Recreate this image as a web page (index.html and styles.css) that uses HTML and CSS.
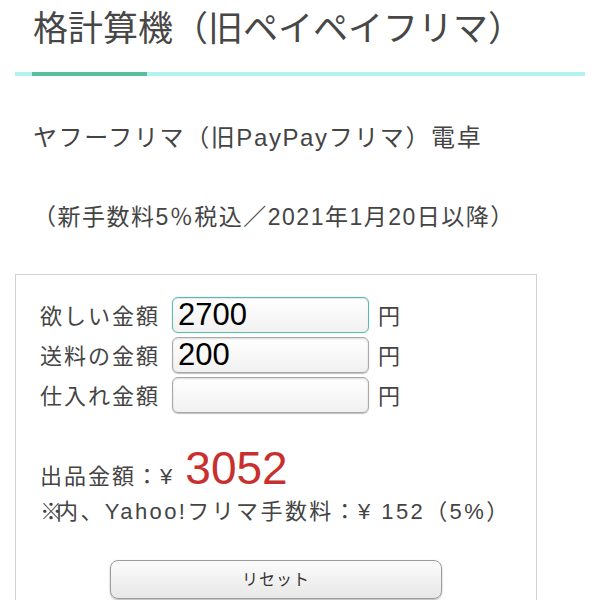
FILE: index.html
```html
<!DOCTYPE html>
<html lang="ja">
<head>
<meta charset="utf-8">
<title>格計算機（旧ペイペイフリマ）</title>
<link rel="stylesheet" href="styles.css">
</head>
<body>
<h1 class="title">格計算機（旧ペイペイフリマ）</h1>
<div class="bar"></div>
<p class="lead">ヤフーフリマ（旧PayPayフリマ）電卓</p>
<p class="note">（新手数料5％税込／2021年1月20日以降）</p>
<div class="calc">
  <div class="row">
    <label class="label">欲しい金額</label>
    <input class="field active" type="text" value="2700">
    <span class="unit">円</span>
  </div>
  <div class="row">
    <label class="label">送料の金額</label>
    <input class="field" type="text" value="200">
    <span class="unit">円</span>
  </div>
  <div class="row">
    <label class="label">仕入れ金額</label>
    <input class="field" type="text" value="">
    <span class="unit">円</span>
  </div>
  <div class="total">出品金額：¥ <span class="num">3052</span></div>
  <div class="fee"><span class="mark">※</span>内、Yahoo!フリマ手数料：¥ 152（5%）</div>
  <button class="reset" type="button">リセット</button>
</div>
</body>
</html>
```
FILE: styles.css
```css
html, body {
  background: #ffffff;
}
body {
  margin: 0;
  padding: 0 15px;
  font-family: "Liberation Sans", "Noto Sans CJK JP", sans-serif;
  color: #444444;
}
.title {
  margin: 0;
  padding: 11px 18px 0;
  font-size: 35px;
  line-height: 35px;
  font-weight: normal;
  color: #474747;
}
.bar {
  margin-top: 26px;
  height: 4px;
  background: #b0f4f2;
}
.bar::before {
  content: "";
  display: block;
  height: 4px;
  width: 115px;
  margin-left: 17px;
  background: #5cbf9c;
}
.lead {
  margin: 50px 0 0;
  padding-left: 18px;
  font-size: 24px;
  line-height: 24px;
  letter-spacing: 1.6px;
}
.note {
  margin: 56px 0 0;
  padding-left: 18px;
  font-size: 23px;
  line-height: 23px;
  letter-spacing: 1.5px;
}
.calc {
  margin-top: 45px;
  width: 522px;
  box-sizing: border-box;
  border: 1px solid #d2d2d2;
  padding: 22px 24px 40px;
}
.row {
  display: flex;
  align-items: center;
  height: 36px;
  margin-bottom: 4px;
}
.label {
  width: 132px;
  padding-top: 3px;
  font-size: 22px;
  line-height: 24px;
  letter-spacing: 2px;
}
.field {
  width: 197px;
  height: 36px;
  box-sizing: border-box;
  margin: 0;
  padding: 0 5px;
  border: 1px solid #a8a8a8;
  border-radius: 6px;
  background: linear-gradient(#ffffff, #f1f1f1);
  box-shadow: inset 0 1px 2px rgba(0, 0, 0, 0.15), 0 1px 1px rgba(0, 0, 0, 0.25);
  font-family: "Liberation Sans", sans-serif;
  font-size: 31px;
  color: #000000;
  outline: none;
}
.field.active {
  border-color: #5fb9b1;
  box-shadow: 0 0 1px #5fb9b1, inset 0 1px 1px rgba(0, 0, 0, 0.1);
}
.unit {
  margin-left: 9px;
  padding-top: 3px;
  font-size: 22px;
  line-height: 24px;
}
.total {
  margin-top: 37px;
  font-size: 22px;
  line-height: 36px;
  letter-spacing: 2px;
}
.num {
  margin-left: 3px;
  font-size: 46px;
  line-height: 36px;
  letter-spacing: 0;
  color: #c7302e;
}
.fee {
  font-size: 22px;
  line-height: 34px;
  letter-spacing: 2.4px;
}
.mark {
  letter-spacing: -6px;
}
.reset {
  display: block;
  margin: 31px 0 0 70px;
  width: 332px;
  height: 39px;
  padding: 0 0 4px;
  border: 1px solid #9c9c9c;
  border-radius: 8px;
  background: linear-gradient(#fbfbfb, #e8e8e8);
  box-shadow: 0 1px 2px rgba(0, 0, 0, 0.3);
  font-family: "Noto Sans CJK JP", sans-serif;
  font-size: 16px;
  letter-spacing: 1px;
  color: #333333;
}
```
